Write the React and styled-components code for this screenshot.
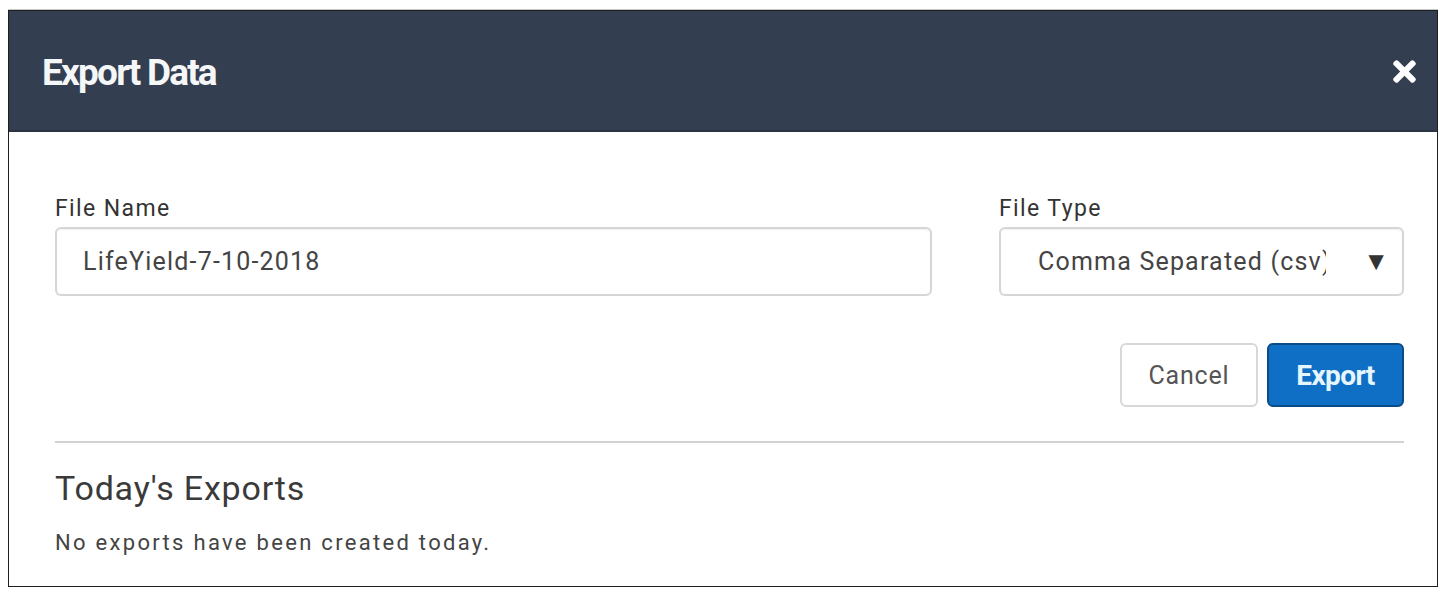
import React from "react";
import styled, { createGlobalStyle } from "styled-components";
import { FaTimes } from "react-icons/fa";

const GlobalStyle = createGlobalStyle`
  html, body {
    margin: 0;
    background: #ffffff;
  }
  body {
    padding: 10px 8px 0;
    font-family: Roboto, "Liberation Sans", sans-serif;
  }
`;

const App = () => {
  return (
    <>
      <GlobalStyle />
      <Modal>
        <Header>
          <Title>Export Data</Title>
          <CloseButton aria-label="close">
            <FaTimes size={33} />
          </CloseButton>
        </Header>
        <Body>
          <Fields>
            <Field>
              <Label>File Name</Label>
              <TextBox>LifeYield-7-10-2018</TextBox>
            </Field>
            <Field>
              <Label>File Type</Label>
              <SelectBox>
                <SelectText>Comma Separated (csv)</SelectText>
                <Arrow>▼</Arrow>
              </SelectBox>
            </Field>
          </Fields>
          <Actions>
            <Button>Cancel</Button>
            <Button primary>Export</Button>
          </Actions>
          <Divider />
          <SectionTitle>Today's Exports</SectionTitle>
          <Note>No exports have been created today.</Note>
        </Body>
      </Modal>
    </>
  );
};

export default App;

const Modal = styled.div`
  width: 1430px;
  height: 577px;
  box-sizing: border-box;
  border: 1px solid #1e1e1e;
  box-shadow: 0 -1px 0 #c8c8c8;
  background: #ffffff;
  display: flex;
  flex-direction: column;
`;

const Header = styled.div`
  height: 121px;
  flex-shrink: 0;
  background: #333e50;
  border-bottom: 2px solid #2a3342;
  box-sizing: border-box;
  display: flex;
  align-items: center;
  justify-content: space-between;
  padding: 0 16px 0 33px;
`;

const Title = styled.h1`
  margin: 4px 0 0;
  font-family: Roboto, "Liberation Sans", sans-serif;
  font-size: 37px;
  font-weight: 700;
  letter-spacing: -1.8px;
  color: #f4f6f8;
`;

const CloseButton = styled.button`
  border: 0;
  background: transparent;
  padding: 0;
  margin-top: 2px;
  color: #ffffff;
  display: flex;
  align-items: center;
  cursor: pointer;
`;

const Body = styled.div`
  padding: 63px 33px 0 46px;
  display: flex;
  flex-direction: column;
`;

const Fields = styled.div`
  display: grid;
  grid-template-columns: 1fr 405px;
  column-gap: 67px;
`;

const Field = styled.div`
  display: flex;
  flex-direction: column;
  gap: 5px;
`;

const Label = styled.label`
  font-size: 23px;
  line-height: 27px;
  letter-spacing: 1.4px;
  color: #333333;
`;

const Box = styled.div`
  height: 69px;
  box-sizing: border-box;
  border: 2px solid #d6d6d6;
  border-radius: 6px;
  box-shadow: inset 0 1px 2px rgba(0, 0, 0, 0.06);
  display: flex;
  align-items: center;
  font-size: 25px;
  letter-spacing: 1.2px;
  color: #444444;
`;

const TextBox = styled(Box)`
  padding-left: 26px;
`;

const SelectBox = styled(Box)`
  padding: 0 13px 0 37px;
  justify-content: space-between;
`;

const SelectText = styled.span`
  width: 288px;
  overflow: hidden;
  white-space: nowrap;
  text-overflow: clip;
`;

const Arrow = styled.span`
  font-size: 26px;
  color: #333333;
  letter-spacing: 0;
`;

const Actions = styled.div`
  margin-top: 47px;
  display: flex;
  justify-content: flex-end;
  gap: 9px;
`;

const Button = styled.button`
  height: 64px;
  width: ${(p) => (p.primary ? "137px" : "138px")};
  box-sizing: border-box;
  border-radius: 6px;
  border: 2px solid ${(p) => (p.primary ? "#0b4c86" : "#d8d8d8")};
  background: ${(p) => (p.primary ? "#0e6fc4" : "#ffffff")};
  color: ${(p) => (p.primary ? "#e6f6ff" : "#555555")};
  font-family: Roboto, "Liberation Sans", sans-serif;
  font-size: ${(p) => (p.primary ? "28px" : "25px")};
  font-weight: ${(p) => (p.primary ? 700 : 400)};
  letter-spacing: ${(p) => (p.primary ? "-0.6px" : "0.8px")};
  cursor: pointer;
`;

const Divider = styled.hr`
  margin: 34px 0 0;
  border: 0;
  height: 2px;
  background: #d2d2d2;
`;

const SectionTitle = styled.h2`
  margin: 25px 0 0;
  font-size: 34px;
  line-height: 40px;
  font-weight: 400;
  letter-spacing: 0.8px;
  color: #3a3a3a;
`;

const Note = styled.p`
  margin: 22px 0 0;
  font-size: 22px;
  line-height: 26px;
  letter-spacing: 2.3px;
  color: #444444;
`;
